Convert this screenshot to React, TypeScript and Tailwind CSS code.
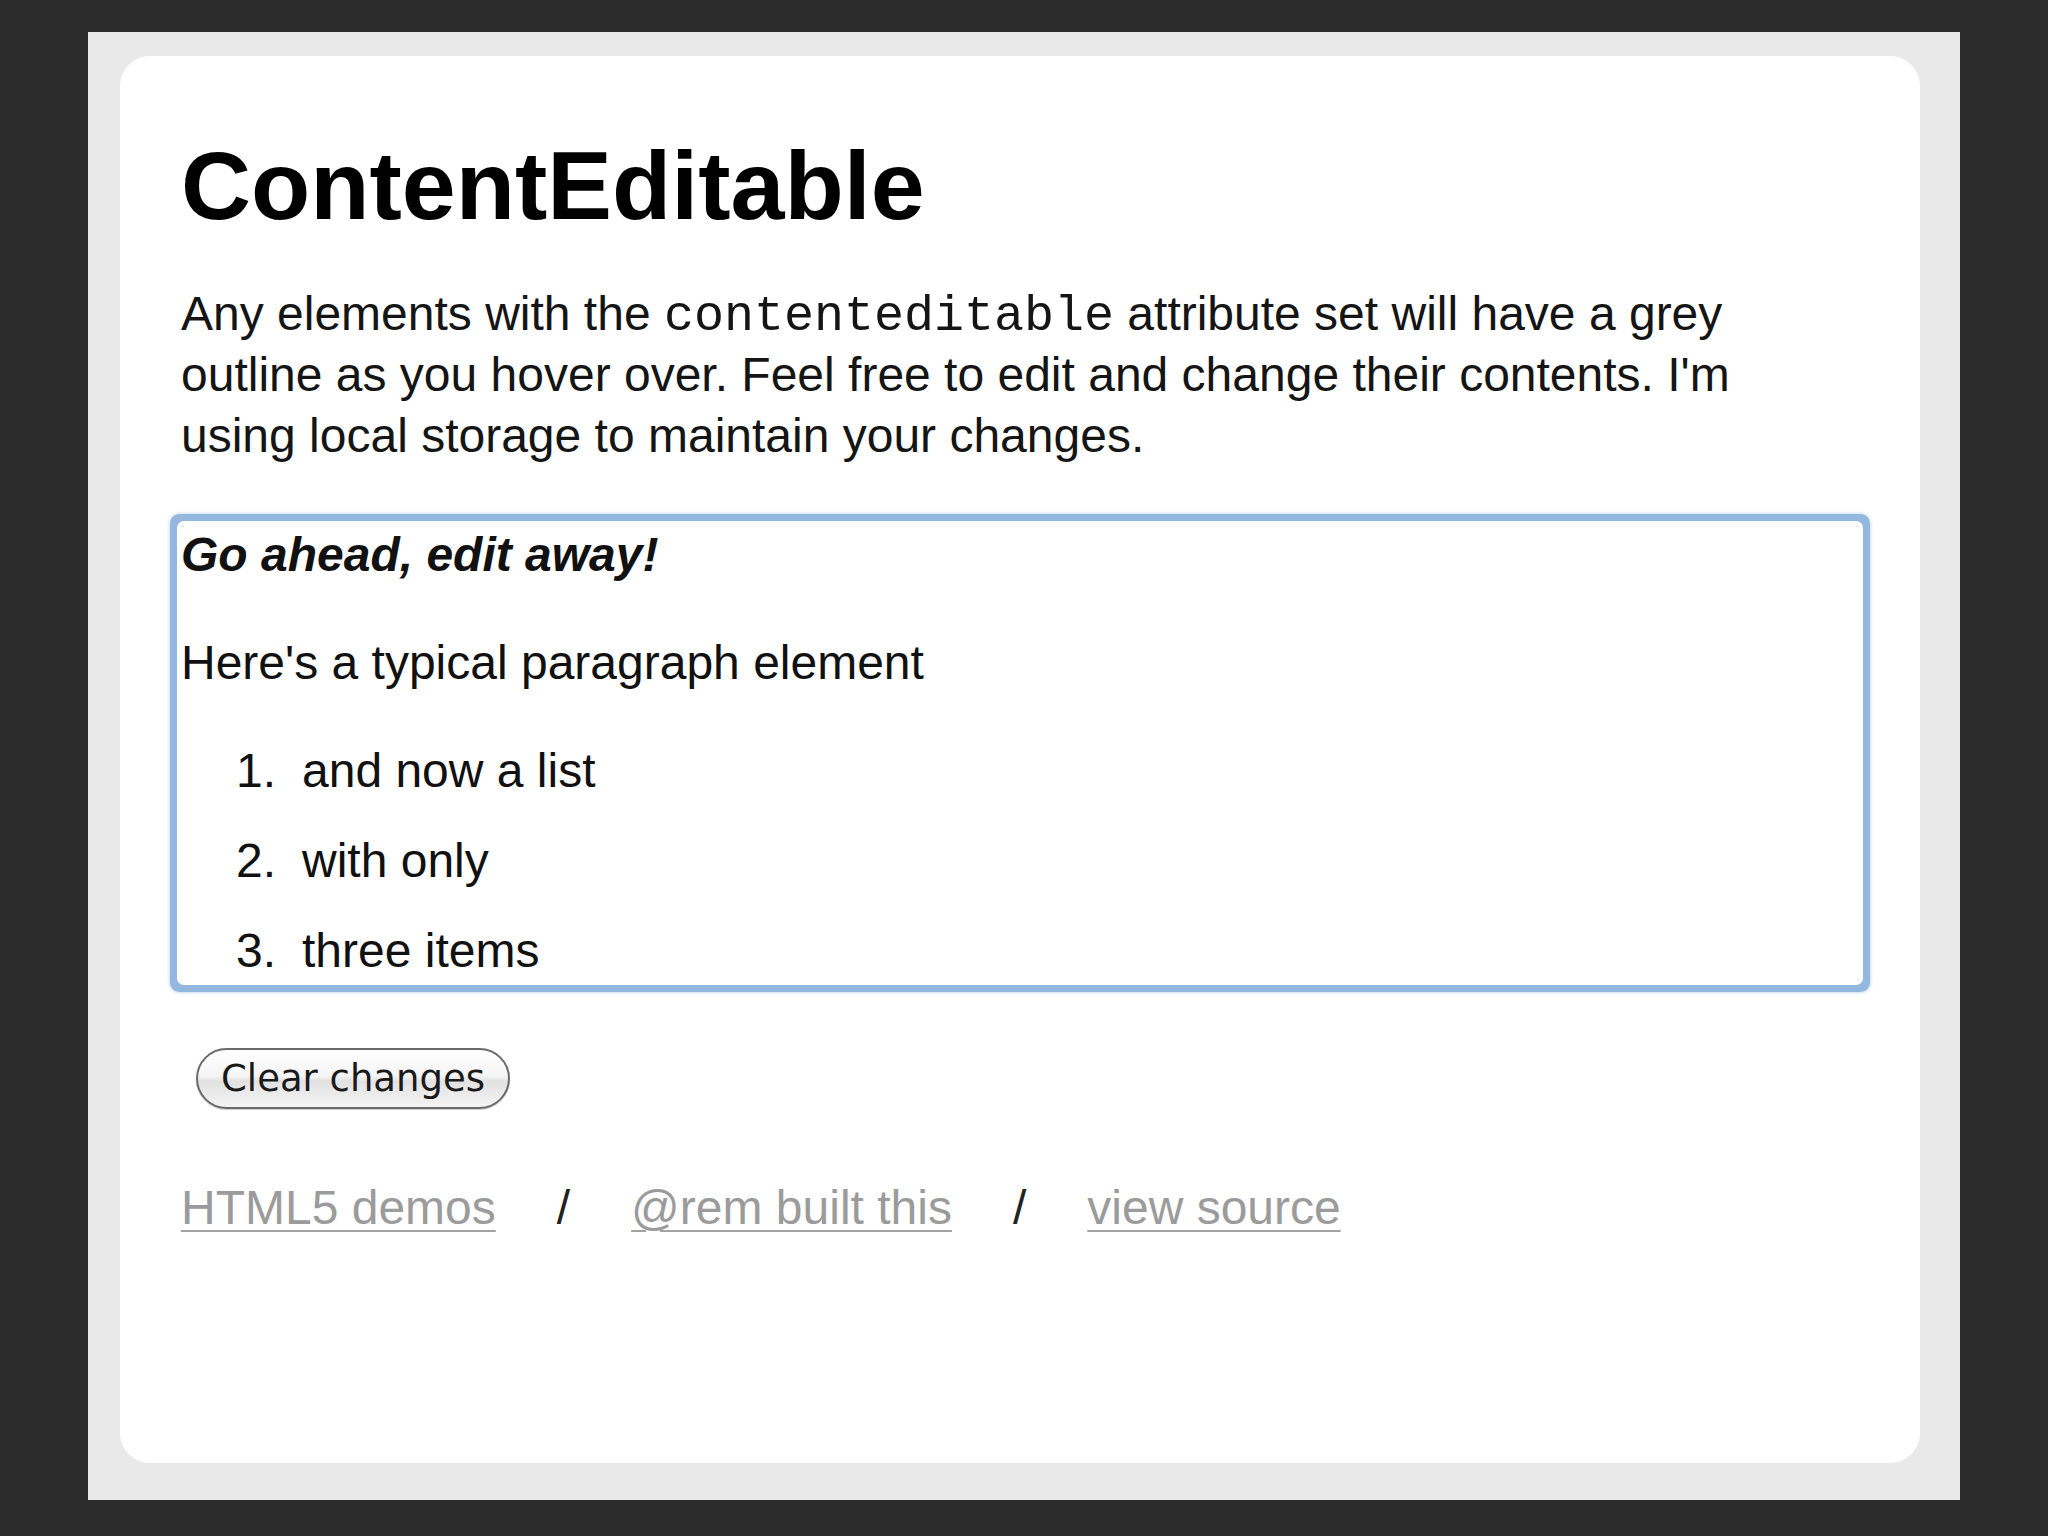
import React from 'react';

const sans = { fontFamily: '"Liberation Sans", Helvetica, Arial, sans-serif' };

const items = ['and now a list', 'with only', 'three items'];

const FooterLink: React.FC<{ label: string }> = ({ label }) => (
  <a
    href="#"
    className="text-[#9b9b9b] underline decoration-[#a3a3a3] decoration-2 underline-offset-[6px]"
  >
    {label}
  </a>
);

export default function App() {
  return (
    <div className="w-full h-[1536px] bg-[#2c2c2c] pl-[88px] pt-[32px] overflow-hidden" style={sans}>
      <div className="w-[1872px] h-[1468px] bg-[#e9e9e9] pl-[32px] pt-[24px]">
        <div className="w-[1800px] h-[1407px] rounded-[30px] bg-white px-[61px] pt-[82px]">
          <h1 className="text-[97px] leading-[96px] font-bold text-black">ContentEditable</h1>

          <p className="mt-[49px] max-w-[1620px] text-[48px] leading-[61px] text-[#151515]">
            Any elements with the{' '}
            <code
              className="text-[50px] leading-none"
              style={{ fontFamily: '"Liberation Mono", "Courier New", monospace' }}
            >
              contenteditable
            </code>{' '}
            attribute set will have a grey outline as you hover over. Feel free to edit and change their
            contents. I'm using local storage to maintain your changes.
          </p>

          <div
            className="mt-[59px] rounded-[3px] text-[48px] leading-[60px] text-[#111] shadow-[0_0_0_4px_#ffffff,0_0_0_11px_#93b7de,0_0_3px_12px_rgba(147,183,222,0.45)]"
            contentEditable
            suppressContentEditableWarning
          >
            <div className="font-bold italic">Go ahead, edit away!</div>
            <p className="mt-[48px]">Here's a typical paragraph element</p>
            <ol className="mt-[48px] pl-[55px] flex flex-col gap-[30px]">
              {items.map((item, i) => (
                <li key={item} className="flex">
                  <span className="w-[66px] shrink-0">{i + 1}.</span>
                  <span>{item}</span>
                </li>
              ))}
            </ol>
          </div>

          <button
            className="mt-[67px] ml-[15px] w-[314px] h-[61px] rounded-full border-2 border-[#6a6a6a] bg-[linear-gradient(to_bottom,#ffffff_0%,#f5f5f5_45%,#e2e2e2_55%,#f4f4f4_100%)] shadow-[0_1px_1px_rgba(0,0,0,0.2)] flex items-center justify-center text-[37px] text-[#1a1a1a]"
            style={{ fontFamily: '"DejaVu Sans", "Lucida Grande", sans-serif' }}
          >
            Clear changes
          </button>

          <div className="mt-[69px] flex items-baseline gap-[61px] text-[48px] leading-[60px]">
            <FooterLink label="HTML5 demos" />
            <span className="text-[#222]">/</span>
            <FooterLink label="@rem built this" />
            <span className="text-[#222]">/</span>
            <FooterLink label="view source" />
          </div>
        </div>
      </div>
    </div>
  );
}
